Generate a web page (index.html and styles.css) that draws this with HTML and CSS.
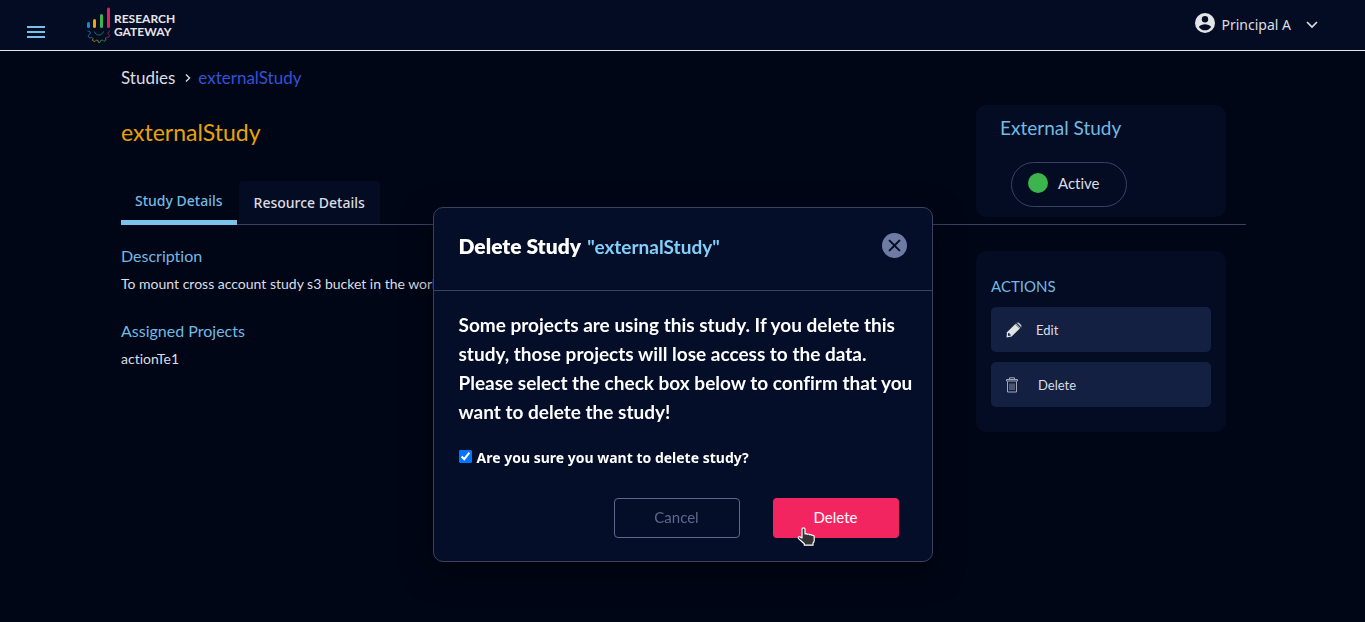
FILE: index.html
```html
<!DOCTYPE html>
<html lang="en">
<head>
<meta charset="utf-8">
<meta name="viewport" content="width=device-width, initial-scale=1">
<title>Research Gateway - externalStudy</title>
<link rel="stylesheet" href="styles.css">
</head>
<body>
<header class="topbar">
  <button class="menu-btn" type="button" aria-label="Open menu">
    <svg width="18" height="12" viewBox="0 0 18 12"><path d="M0 1h18M0 6h18M0 11h18" stroke="#76c0ea" stroke-width="2"/></svg>
  </button>
  <a class="brand" href="#">
    <svg width="24" height="36" viewBox="0 0 24 36" fill="none">
      <g stroke-width="3" stroke-linecap="round">
        <path d="M1.500 16.500v3" stroke="#0a8fe0"/>
        <path d="M7.500 13.500v6" stroke="#eba50a"/>
        <path d="M14.500 8.500v11" stroke="#3bb54a"/>
        <path d="M21.500 2v17.500" stroke="#e0205a"/>
      </g>
      <path d="M.500 24l3 1-.5 2-2 1.500 1.500 2.500 2.500-.5" stroke="#17608a"/>
      <path d="M5 30.500l1 1-.5 2 2.500 1 1.500-1.500 1.500.5.500 2" stroke="#94791c"/>
      <path d="M11.500 35.500h1.500l.5-2 2-.5 1.500 1.500 2-1.500-.500-2" stroke="#347a3e"/>
      <path d="M18.500 31l1-1 2 .5 1-2.500-1.500-1 .500-2 1.500-1" stroke="#7c1f48"/>
      <path d="M7.500 24.500c1 4.500 7.500 5 9 0" stroke="#1f7064"/>
    </svg>
    <span class="brand-name">RESEARCH<br>GATEWAY</span>
  </a>
  <button class="user" type="button">
    <svg class="avatar" width="20" height="20" viewBox="0 0 20 20"><circle cx="10" cy="10" r="10" fill="#e2e4e8"/><circle cx="10" cy="6.200" r="3.200" fill="#040c23"/><path d="M3.800 14c1.200-2 4-2.800 6.200-2.800s5 .8 6.200 2.800a7.500 7.500 0 0 1-12.400 0z" fill="#040c23"/></svg>
    <span>Principal A</span>
    <svg class="chevron" width="12" height="8" viewBox="0 0 12 8"><path d="M1 1l5 5 5-5" fill="none" stroke="#dfe1e6" stroke-width="1.600"/></svg>
  </button>
</header>

<main class="page">
  <section class="summary">
    <div class="summary-main">
      <nav class="crumbs" aria-label="Breadcrumb">
        <a href="#">Studies</a>
        <svg width="6" height="8" viewBox="0 0 6 8"><path d="M1 .500l3.500 3.500L1 7.500" fill="none" stroke="#dcdde2" stroke-width="1.400"/></svg>
        <a class="current" href="#" aria-current="page">externalStudy</a>
      </nav>
      <h1 class="title">externalStudy</h1>
      <div class="tabs" role="tablist">
        <button class="tab active" role="tab" aria-selected="true" type="button">Study Details</button>
        <button class="tab" role="tab" aria-selected="false" type="button">Resource Details</button>
      </div>
    </div>
    <aside class="card status-card">
      <h2 class="status-title">External Study</h2>
      <div class="status"><span class="dot"></span>Active</div>
    </aside>
  </section>

  <section class="content">
    <div class="details">
      <h3>Description</h3>
      <p>To mount cross account study s3 bucket in the workspace</p>
      <h3>Assigned Projects</h3>
      <p>actionTe1</p>
    </div>
    <aside class="card actions">
      <h2 class="actions-title">ACTIONS</h2>
      <button class="action" type="button">
        <svg width="16" height="16" viewBox="0 0 16 16"><path d="M1 10.200L9.800 1.600l4.500 4.500L5.600 14.500.500 15.500z" fill="#e3e3e3"/><path d="M10.600.900Q12 0 13 .800l2.200 2.200q.800 1-.200 2.200z" fill="#c4c6cb"/><path d="M9.200 2.200l4.600 4.600M10.700.800l4.600 4.600" stroke="#6c748a" stroke-width=".8"/><path d="M2 11l1.500.2.300 1.300 1.300.3-.4.800-2.500.5z" fill="#142042"/></svg>
        <span>Edit</span>
      </button>
      <button class="action" type="button">
        <svg width="12" height="16" viewBox="0 0 12 16" fill="none" stroke="#a2a8b8"><path d="M3.500 2V.800h5V2M.500 2.500h11v1.500H.500zM1.500 4.500v10.500h9V4.500"/><path d="M4 6.500v6.500M6 6.500v6.500M8 6.500v6.500" stroke="#858ca0"/></svg>
        <span>Delete</span>
      </button>
    </aside>
  </section>
</main>

<div class="overlay">
  <div class="modal" role="dialog" aria-modal="true" aria-labelledby="modal-title">
    <div class="modal-head">
      <h2 class="modal-title" id="modal-title">Delete Study <span>"externalStudy"</span></h2>
      <button class="close" type="button" aria-label="Close">
        <svg width="13" height="13" viewBox="0 0 12 12"><path d="M1.500 1.500l9 9M10.500 1.500l-9 9" stroke="#050e28" stroke-width="1.800" stroke-linecap="round"/></svg>
      </button>
    </div>
    <div class="modal-body">
      <p class="warning">Some projects are using this study. If you delete this study, those projects will lose access to the data. Please select the check box below to confirm that you want to delete the study!</p>
      <div class="confirm">
        <input type="checkbox" id="confirm" checked>
        <label for="confirm">Are you sure you want to delete study?</label>
      </div>
      <div class="buttons">
        <button class="btn cancel" type="button">Cancel</button>
        <button class="btn delete" type="button">Delete
          <svg class="pointer" width="19" height="19" viewBox="0 0 19 19"><path d="M5 2.300C5 .500 8 .500 8 2.300V7q1.200-.8 2.300.3 1.300-.8 2.500.5 1.300-.7 2.400.5 2-.4 2 1.700v3.500q0 1.500-1.200 2.500v2.200H7.300v-1.500L4.800 14.500 1.500 11.600q-.8-1.600.8-2.100L5 11z" fill="#333" stroke="#fff" stroke-width="1.200" stroke-linejoin="round"/></svg>
        </button>
      </div>
    </div>
  </div>
</div>
</body>
</html>
```

FILE: styles.css
```css
* { box-sizing: border-box; }

:root {
  --text-font: Lato, "Noto Sans", sans-serif;
  --ui-font: "Noto Sans", "Open Sans", sans-serif;
  --panel: #040c23;
  --blue: #73b9e2;
  --light: #dcdde2;
  --line: #3a4260;
}

body {
  margin: 0;
  min-height: 100vh;
  background: #010617;
  color: var(--light);
  font: 14px/20px var(--text-font);
  font-variant-ligatures: none;
}

button { font: inherit; color: inherit; background: none; border: 0; padding: 0; cursor: pointer; }
a { color: inherit; text-decoration: none; }
h1, h2, h3, p { margin: 0; font-weight: 400; }
svg { display: block; flex: none; }

.topbar {
  display: flex;
  align-items: center;
  height: 51px;
  padding: 0 47px 0 27px;
  background: var(--panel);
  border-bottom: 1px solid #e4e5e8;
}
.menu-btn { padding-top: 14px; }
.brand { display: flex; align-items: center; gap: 3px; margin-left: 42px; }
.brand-name { font: 700 12px/13px Lato, sans-serif; color: #e4e5e8; }
.user { display: flex; align-items: center; gap: 6px; margin-left: auto; font: 14px/20px var(--ui-font); }
.avatar { margin-bottom: 4px; }
.chevron { margin-left: 9px; }

.page { padding: 0 119px 0 121px; }
.summary { display: flex; justify-content: space-between; border-bottom: 1px solid var(--line); }
.summary-main { flex: 1; padding-top: 16px; }
.crumbs { display: flex; align-items: center; gap: 7px; font-size: 17px; line-height: 22px; }
.crumbs svg { margin-left: 3px; }
.current { color: #3253d4; }
.title { margin-top: 28px; font-size: 23px; line-height: 30px; color: #e6a208; }
.tabs { display: flex; gap: 2px; margin-top: 34px; }
.tab { height: 43px; padding: 0 15px; border-radius: 4px 4px 0 0; background: var(--panel); font: 500 14px/20px var(--ui-font); }
.tab.active { height: 44px; margin-bottom: -1px; padding: 0 14px; background: none; color: var(--blue); border-bottom: 5px solid #7cc2ea; }

.card { width: 250px; margin-right: 20px; border-radius: 10px; background: var(--panel); }
.status-card { height: 112px; margin-top: 54px; padding: 12px 24px 0; }
.status-title { font-size: 19px; line-height: 22px; color: var(--blue); }
.status {
  display: inline-flex;
  align-items: center;
  gap: 10px;
  height: 45px;
  margin: 23px 0 0 11px;
  padding: 0 26px 3px 16px;
  border: 1px solid var(--line);
  border-radius: 23px;
  font-size: 15px;
}
.dot { width: 20px; height: 20px; border-radius: 50%; background: #3cb54c; }

.content { display: flex; justify-content: space-between; align-items: flex-start; }
.details { padding-top: 21px; }
.details h3 { font-size: 16px; line-height: 20px; color: var(--blue); }
.details p { margin: 8px 0 27px; }
.actions { margin-top: 26px; padding: 25px 15px; }
.actions-title { font-size: 15px; line-height: 20px; margin-bottom: 11px; color: var(--blue); }
.action {
  display: flex;
  align-items: center;
  gap: 14px;
  width: 100%;
  height: 45px;
  padding: 0 15px;
  border-radius: 5px;
  background: #142042;
  font-size: 13px;
}
.action + .action { margin-top: 10px; gap: 20px; }

.overlay { position: fixed; inset: 0; display: flex; justify-content: center; align-items: flex-start; padding: 207px 16px 0; }
.modal {
  width: 100%;
  max-width: 500px;
  border: 1px solid var(--line);
  border-radius: 10px;
  background: #050e28;
  box-shadow: 0 10px 30px rgba(0, 0, 0, .5);
  color: #fff;
}
.modal-head {
  display: flex;
  justify-content: space-between;
  align-items: flex-start;
  padding: 25px 25px 30px;
  border-bottom: 1px solid var(--line);
}
.modal-title { font-size: 21px; line-height: 26px; font-weight: 800; }
.modal-title span { margin-left: 2px; font-size: 19px; font-weight: 700; color: #82cffa; }
.close { display: grid; place-items: center; width: 25px; height: 25px; border-radius: 50%; background: #6f7ba3; }
.modal-body { padding: 19px 14px 23px 25px; }
.warning { font-size: 19px; line-height: 29px; font-weight: 700; }
.confirm { display: flex; align-items: center; gap: 5px; margin-top: 21px; font: 700 14px/22px var(--ui-font); }
.confirm input { width: 13px; height: 13px; margin: 0 0 3px; accent-color: #0075ff; }
.buttons { display: flex; justify-content: flex-end; gap: 33px; margin: 29px 19px 0 0; }
.btn { position: relative; width: 126px; height: 40px; padding-bottom: 2px; border-radius: 4px; font-size: 15px; }
.cancel { border: 1px solid #5c6890; color: #5c6890; }
.delete { background: #f32561; color: #fff; }
.pointer { position: absolute; left: 24px; top: 29px; }
```
